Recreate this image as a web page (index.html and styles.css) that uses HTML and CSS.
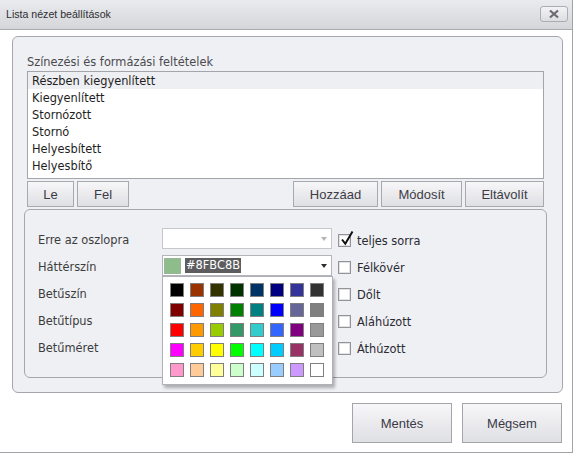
FILE: index.html
```html
<!DOCTYPE html>
<html lang="hu">
<head>
<meta charset="utf-8">
<title>Lista nézet beállítások</title>
<link rel="stylesheet" href="styles.css">
</head>
<body>
<div class="window">
  <div class="titlebar">
    <span class="title">Lista nézet beállítások</span>
    <div class="close">
      <svg width="12" height="10" viewBox="0 0 12 10"><path d="M2 1.5 L10 8.5 M10 1.5 L2 8.5" stroke="#6b6b6f" stroke-width="2.2" fill="none"/></svg>
    </div>
  </div>
  <div class="content">
    <div class="panel outer">
      <div class="list-block">
        <div class="caption">Színezési és formázási feltételek</div>
        <div class="listbox">
          <div class="item selected">Részben kiegyenlített</div>
          <div class="item">Kiegyenlített</div>
          <div class="item">Stornózott</div>
          <div class="item">Stornó</div>
          <div class="item">Helyesbített</div>
          <div class="item">Helyesbítő</div>
        </div>
        <div class="list-buttons">
          <div class="btn-group">
            <div class="btn btn-le">Le</div>
            <div class="btn btn-fel">Fel</div>
          </div>
          <div class="btn-group">
            <div class="btn btn-add">Hozzáad</div>
            <div class="btn btn-mod">Módosít</div>
            <div class="btn btn-del">Eltávolít</div>
          </div>
        </div>
      </div>
      <div class="panel inner">
        <div class="form-grid">
          <div class="lbl">Erre az oszlopra</div>
          <div class="combo">
            <span class="combo-text"></span>
            <span class="arrow light"></span>
          </div>
          <div class="chk-row">
            <span class="chk checked">
              <svg class="tick" width="16" height="17" viewBox="0 0 16 17"><path d="M3 9.5 L6.3 13.8 L13.5 1.5" stroke="#111" stroke-width="2" fill="none" stroke-linejoin="miter"/></svg>
            </span>
            <span class="chk-lbl">teljes sorra</span>
          </div>

          <div class="lbl">Háttérszín</div>
          <div class="combo color-combo">
            <span class="swatch-preview"></span>
            <span class="sel-text">#8FBC8B</span>
            <span class="arrow dark"></span>
            <div class="palette">
              <span class="sw" style="background:#000000"></span>
              <span class="sw" style="background:#993300"></span>
              <span class="sw" style="background:#333300"></span>
              <span class="sw" style="background:#003300"></span>
              <span class="sw" style="background:#003366"></span>
              <span class="sw" style="background:#000080"></span>
              <span class="sw" style="background:#333399"></span>
              <span class="sw" style="background:#333333"></span>
              <span class="sw" style="background:#800000"></span>
              <span class="sw" style="background:#FF6600"></span>
              <span class="sw" style="background:#808000"></span>
              <span class="sw" style="background:#008000"></span>
              <span class="sw" style="background:#008080"></span>
              <span class="sw" style="background:#0000FF"></span>
              <span class="sw" style="background:#666699"></span>
              <span class="sw" style="background:#808080"></span>
              <span class="sw" style="background:#FF0000"></span>
              <span class="sw" style="background:#FF9900"></span>
              <span class="sw" style="background:#99CC00"></span>
              <span class="sw" style="background:#339966"></span>
              <span class="sw" style="background:#33CCCC"></span>
              <span class="sw" style="background:#3366FF"></span>
              <span class="sw" style="background:#800080"></span>
              <span class="sw" style="background:#999999"></span>
              <span class="sw" style="background:#FF00FF"></span>
              <span class="sw" style="background:#FFCC00"></span>
              <span class="sw" style="background:#FFFF00"></span>
              <span class="sw" style="background:#00FF00"></span>
              <span class="sw" style="background:#00FFFF"></span>
              <span class="sw" style="background:#00CCFF"></span>
              <span class="sw" style="background:#993366"></span>
              <span class="sw" style="background:#C0C0C0"></span>
              <span class="sw" style="background:#FF99CC"></span>
              <span class="sw" style="background:#FFCC99"></span>
              <span class="sw" style="background:#FFFF99"></span>
              <span class="sw" style="background:#CCFFCC"></span>
              <span class="sw" style="background:#CCFFFF"></span>
              <span class="sw" style="background:#99CCFF"></span>
              <span class="sw" style="background:#CC99FF"></span>
              <span class="sw" style="background:#FFFFFF"></span>
            </div>
          </div>
          <div class="chk-row">
            <span class="chk"></span>
            <span class="chk-lbl">Félkövér</span>
          </div>

          <div class="lbl">Betűszín</div>
          <div class="combo hidden-combo"></div>
          <div class="chk-row">
            <span class="chk"></span>
            <span class="chk-lbl">Dőlt</span>
          </div>

          <div class="lbl">Betűtípus</div>
          <div class="combo hidden-combo"></div>
          <div class="chk-row">
            <span class="chk"></span>
            <span class="chk-lbl">Aláhúzott</span>
          </div>

          <div class="lbl">Betűméret</div>
          <div class="combo hidden-combo"></div>
          <div class="chk-row">
            <span class="chk"></span>
            <span class="chk-lbl">Áthúzott</span>
          </div>
        </div>
      </div>
    </div>
    <div class="footer">
      <div class="btn big">Mentés</div>
      <div class="btn big">Mégsem</div>
    </div>
  </div>
</div>
</body>
</html>
```

FILE: styles.css
```css
* { box-sizing: border-box; }

html, body {
  margin: 0;
  padding: 0;
  background: #ffffff;
}

body {
  font-family: "DejaVu Sans", Verdana, sans-serif;
  font-size: 11.4px;
  color: #2a2a2a;
}

.window {
  width: 573px;
  height: 453px;
  background: #ffffff;
  border-right: 1px solid #a2a3a9;
  border-bottom: 1px solid #a2a3a9;
  display: flex;
  flex-direction: column;
}

.titlebar {
  height: 30px;
  flex: none;
  background: linear-gradient(#eaebee, #d5d6da);
  border-bottom: 1px solid #a9aaaf;
  display: flex;
  align-items: center;
  justify-content: space-between;
  padding: 0 4px 2px 6px;
}

.title {
  font-family: "Liberation Sans", Arial, sans-serif;
  font-size: 10.6px;
  color: #2e2e33;
}

.close {
  width: 28px;
  height: 16px;
  border: 1px solid #acadb2;
  border-radius: 3px;
  background: linear-gradient(#f3f3f5, #dcdde0);
  display: flex;
  align-items: center;
  justify-content: center;
  margin-top: 1px;
}

.content {
  flex: 1;
  display: flex;
  flex-direction: column;
}

.panel {
  background: #eff0f4;
  border: 1px solid #a6a7ad;
  border-radius: 6px;
}

.outer {
  margin: 6px 0 0 12px;
  width: 551px;
  height: 357px;
  display: flex;
  flex-direction: column;
}

.list-block {
  padding: 18px 0 0 14px;
  width: 531px;
}

.caption {
  height: 14px;
  line-height: 14px;
  color: #4a4a4f;
  margin-bottom: 2px;
}

.listbox {
  width: 517px;
  height: 108px;
  border: 1px solid #a4a5ab;
  background: #ffffff;
}

.item {
  height: 17px;
  line-height: 16px;
  padding: 1px 0 0 4px;
  color: #1e1e1e;
}

.item.selected {
  background: #eeeff2;
}

.list-buttons {
  margin-top: 2px;
  width: 517px;
  display: flex;
  justify-content: space-between;
}

.btn-group {
  display: flex;
  gap: 3px;
}

.btn {
  height: 26px;
  border: 1px solid #a8a9ae;
  background: linear-gradient(#f7f7f9 0%, #ececef 45%, #dfe0e4 100%);
  font-family: "Liberation Sans", Arial, sans-serif;
  font-size: 13px;
  color: #3c3c46;
  display: flex;
  align-items: center;
  justify-content: center;
}

.btn-le { width: 47px; }
.btn-fel { width: 52px; }
.btn-add { width: 85px; }
.btn-mod { width: 81px; }
.btn-del { width: 79px; }

.inner {
  margin: 2px 0 0 11px;
  width: 523px;
  height: 169px;
  padding: 18px 0 0 13px;
}

.form-grid {
  display: grid;
  grid-template-columns: 118px 170px auto;
  grid-auto-rows: 27px;
  column-gap: 6px;
}

.lbl {
  line-height: 21px;
  padding-top: 2px;
  color: #3c3c3c;
  white-space: nowrap;
}

.combo {
  position: relative;
  height: 21px;
  border: 1px solid #c7c8cc;
  background: #ffffff;
  display: flex;
  align-items: center;
}

.hidden-combo {
  visibility: hidden;
}

.color-combo {
  border-color: #b4b5ba;
}

.arrow {
  position: absolute;
  right: 4px;
  top: 8px;
  width: 0;
  height: 0;
  border-left: 3.5px solid transparent;
  border-right: 3.5px solid transparent;
  border-top: 4px solid #b5b5b8;
}

.arrow.dark {
  border-top-color: #2c2c2c;
}

.swatch-preview {
  width: 17px;
  height: 16px;
  margin-left: 1px;
  background: #8fbc8b;
  border: 1px solid #9bb59a;
}

.sel-text {
  margin-left: 4px;
  height: 15px;
  line-height: 15px;
  padding: 0 1px;
  background: #5d5d5f;
  color: #ffffff;
}

.palette {
  position: absolute;
  top: 20px;
  left: -1px;
  width: 171px;
  height: 109px;
  background: #ffffff;
  border: 1px solid #b0b1b6;
  box-shadow: 2px 3px 3px rgba(0, 0, 0, 0.28);
  padding: 6px 0 0 7px;
  display: grid;
  grid-template-columns: repeat(8, 14px);
  grid-auto-rows: 14px;
  gap: 6px;
  z-index: 5;
}

.sw {
  width: 14px;
  height: 14px;
  border: 1px solid #7f7f7f;
}

.chk-row {
  height: 25px;
  display: flex;
  align-items: center;
}

.chk {
  position: relative;
  width: 13px;
  height: 13px;
  border: 1px solid #939398;
  background: #ffffff;
  box-shadow: inset 0 0 0 1px #e2e2e6;
  flex: none;
}

.tick {
  position: absolute;
  left: 0;
  top: -5px;
}

.chk-lbl {
  margin-left: 6px;
  color: #2a2a33;
}

.footer {
  display: flex;
  justify-content: flex-end;
  gap: 10px;
  padding: 10px 10px 0 0;
}

.btn.big {
  width: 100px;
  height: 40px;
  font-size: 13px;
  color: #3a3a48;
  border-color: #a4a5aa;
}
```
